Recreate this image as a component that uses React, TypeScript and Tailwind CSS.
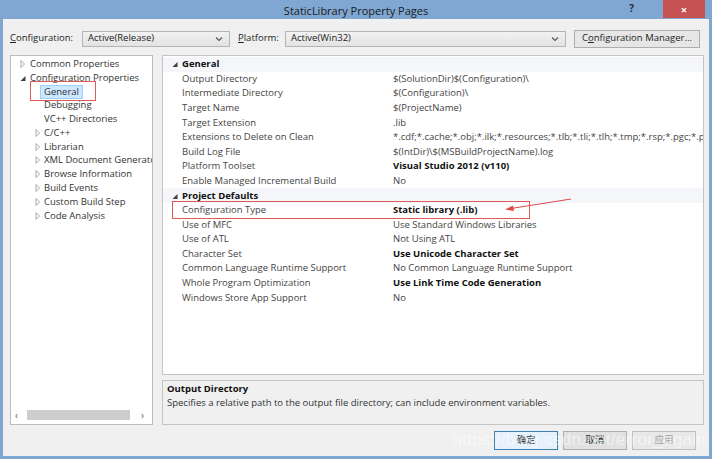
import React from "react";

const F = "font-['Open_Sans','Noto_Sans_CJK_SC',sans-serif]";

function Closed() {
  return (
    <svg width="6" height="8" viewBox="0 0 6 8" className="shrink-0">
      <polygon points="1,0.5 4.5,4 1,7.5" fill="none" stroke="#a8a8a8" strokeWidth="1" />
    </svg>
  );
}
function Open() {
  return (
    <svg width="6" height="8" viewBox="0 0 6 8" className="shrink-0">
      <polygon points="5.5,2 5.5,7 0.5,7" fill="#404040" />
    </svg>
  );
}

function Chevron() {
  return (
    <svg width="8" height="6" viewBox="0 0 8 6">
      <polyline points="1,1.5 4,4.5 7,1.5" fill="none" stroke="#555" strokeWidth="1.1" />
    </svg>
  );
}

function Combo({ text, w }: { text: string; w: string }) {
  return (
    <div className={`${w} shrink-0 h-[16px] border border-[#b4b4b4] bg-gradient-to-b from-[#f2f2f2] to-[#e3e3e3] flex items-center justify-between pl-[5px] pr-[6px]`}>
      <span className="text-[9.5px] text-[#222]">{text}</span>
      <Chevron />
    </div>
  );
}

type Row = { l: string; v?: string; b?: boolean; h?: boolean };

const rows: Row[] = [
  { l: "General", h: true },
  { l: "Output Directory", v: "$(SolutionDir)$(Configuration)\\" },
  { l: "Intermediate Directory", v: "$(Configuration)\\" },
  { l: "Target Name", v: "$(ProjectName)" },
  { l: "Target Extension", v: ".lib" },
  { l: "Extensions to Delete on Clean", v: "*.cdf;*.cache;*.obj;*.ilk;*.resources;*.tlb;*.tli;*.tlh;*.tmp;*.rsp;*.pgc;*.pgd;*.meta;*.tlog;*.manifest" },
  { l: "Build Log File", v: "$(IntDir)\\$(MSBuildProjectName).log" },
  { l: "Platform Toolset", v: "Visual Studio 2012 (v110)", b: true },
  { l: "Enable Managed Incremental Build", v: "No" },
  { l: "Project Defaults", h: true },
  { l: "Configuration Type", v: "Static library (.lib)", b: true },
  { l: "Use of MFC", v: "Use Standard Windows Libraries" },
  { l: "Use of ATL", v: "Not Using ATL" },
  { l: "Character Set", v: "Use Unicode Character Set", b: true },
  { l: "Common Language Runtime Support", v: "No Common Language Runtime Support" },
  { l: "Whole Program Optimization", v: "Use Link Time Code Generation", b: true },
  { l: "Windows Store App Support", v: "No" },
];

const tree: { t: string; lvl: number; arrow?: "o" | "c"; sel?: boolean }[] = [
  { t: "Common Properties", lvl: 0, arrow: "c" },
  { t: "Configuration Properties", lvl: 0, arrow: "o" },
  { t: "General", lvl: 1, sel: true },
  { t: "Debugging", lvl: 1 },
  { t: "VC++ Directories", lvl: 1 },
  { t: "C/C++", lvl: 1, arrow: "c" },
  { t: "Librarian", lvl: 1, arrow: "c" },
  { t: "XML Document Generator", lvl: 1, arrow: "c" },
  { t: "Browse Information", lvl: 1, arrow: "c" },
  { t: "Build Events", lvl: 1, arrow: "c" },
  { t: "Custom Build Step", lvl: 1, arrow: "c" },
  { t: "Code Analysis", lvl: 1, arrow: "c" },
];

export default function App() {
  return (
    <div className={`${F} w-[712px] h-[459px] bg-[#80a7d2] flex flex-col overflow-hidden text-[#1e1e1e]`}>
      {/* Title bar */}
      <div className="h-[19px] shrink-0 grid grid-cols-[1fr_auto_1fr] items-center">
        <div />
        <div className="text-[11px] text-[#1a1a1a] leading-none pt-[1px]">StaticLibrary Property Pages</div>
        <div className="flex justify-end items-start h-full pr-[7px]">
          <span className="text-[10px] font-bold text-[#1e2c40] mr-[29px] mt-[1px]">?</span>
          <div className="w-[42px] h-[18px] bg-[#c75252] flex items-center justify-center">
            <span className="text-white text-[11px] font-bold leading-none">×</span>
          </div>
        </div>
      </div>

      {/* Body */}
      <div className="flex-1 mx-[3px] mb-[3px] bg-[#f0f0f0] flex flex-col">
        {/* config row */}
        <div className="h-[36px] shrink-0 flex items-center pl-[7px] pt-[3px] text-[9.5px]">
          <span className="w-[72px] shrink-0"><u>C</u>onfiguration:</span>
          <Combo text="Active(Release)" w="w-[148px]" />
          <span className="ml-[8px] w-[47px] shrink-0"><u>P</u>latform:</span>
          <Combo text="Active(Win32)" w="w-[281px]" />
          <div className="ml-[8px] w-[126px] shrink-0 h-[18px] border border-[#adadad] bg-[#e6e6e6] flex items-center justify-center text-[9.5px]">
            C<u>o</u>nfiguration Manager...
          </div>
        </div>

        {/* main */}
        <div className="flex pl-[7px] pr-[5px] gap-[9px] h-[370px] shrink-0">
          {/* tree */}
          <div className="relative w-[143px] shrink-0 h-full bg-white border border-[#bcbcbc] flex flex-col overflow-hidden">
            <div className="flex flex-col pt-[1px] text-[9.5px] text-[#333]">
              {tree.map((it, i) => (
                <div key={i} className="h-[13.8px] flex items-center whitespace-nowrap">
                  <div className={it.lvl === 0 ? "w-[19px] shrink-0 pl-[9px] flex" : "w-[33px] shrink-0 pl-[24px] flex"}>
                    {it.arrow === "c" ? <Closed /> : it.arrow === "o" ? <Open /> : null}
                  </div>
                  {it.sel ? (
                    <span className="bg-[#cce8ff] border border-[#99d1ff] px-[3px] -ml-[4px] leading-[12px]">{it.t}</span>
                  ) : (
                    <span>{it.t}</span>
                  )}
                </div>
              ))}
            </div>
            <div className="mt-auto h-[14px] flex items-center px-[4px] mb-[2px]">
              <span className="text-[10px] text-[#666] w-[12px]">‹</span>
              <div className="w-[103px] h-[10px] bg-[#cdcdcd]" />
              <span className="ml-auto text-[10px] text-[#666] mr-[4px]">›</span>
            </div>
            {/* annotation */}
            <div className="absolute left-[19px] top-[25px] w-[66px] h-[20px] border border-[#e05a5a]" />
          </div>

          {/* right */}
          <div className="flex-1 min-w-0 flex flex-col gap-[5px]">
            <div className="relative h-[320px] bg-white border border-[#c4c4c4] pt-[1px] overflow-hidden">
              {rows.map((r, i) =>
                r.h ? (
                  <div key={i} className="h-[14.6px] flex items-center bg-[#f4f6fa]">
                    <div className="w-[19px] shrink-0 pl-[9px] flex"><Open /></div>
                    <span className="text-[9.5px] font-bold text-[#111]">{r.l}</span>
                  </div>
                ) : (
                  <div key={i} className="h-[14.6px] flex items-center text-[9.5px] whitespace-nowrap overflow-hidden">
                    <span className="pl-[19px] w-[230px] shrink-0 text-[#444]">{r.l}</span>
                    <span className={r.b ? "font-bold text-[#111]" : "text-[#444]"}>{r.v}</span>
                  </div>
                )
              )}
              {/* annotations */}
              <div className="absolute left-[9px] top-[145px] w-[358px] h-[18px] border border-[#e05a5a]" />
              <svg className="absolute left-[340px] top-[140px]" width="70" height="20" viewBox="0 0 70 20">
                <line x1="68" y1="3" x2="8" y2="12.5" stroke="#e0474a" strokeWidth="1" />
                <polygon points="2,13.5 10,9.5 11,15" fill="#e0474a" />
              </svg>
            </div>
            <div className="h-[45px] bg-[#f0f0f0] border border-[#c4c4c4] px-[4px] pt-[1px] text-[9.5px] leading-[14px]">
              <div className="font-bold text-[#111]">Output Directory</div>
              <div className="text-[#333]">Specifies a relative path to the output file directory; can include environment variables.</div>
            </div>
          </div>
        </div>

        {/* buttons */}
        <div className="relative flex-1 flex items-center justify-end pr-[13px] gap-[5px]">
          <div className="w-[64px] h-[19px] border border-[#3c7fb1] bg-[#e5f1fb] flex items-center justify-center text-[9.5px]">确定</div>
          <div className="w-[64px] h-[19px] border border-[#adadad] bg-[#e1e1e1] flex items-center justify-center text-[9.5px]">取消</div>
          <div className="w-[64px] h-[19px] border border-[#bfbfbf] bg-[#e8e8e8] flex items-center justify-center text-[9.5px] text-[#a0a0a0]">应用</div>
          <div className="absolute right-[3px] top-[6px] text-[17px] leading-none text-white/50 font-['Liberation_Sans',sans-serif] tracking-[0.3px] pointer-events-none">
            https://blog.csdn.net/error_again
          </div>
        </div>
      </div>
    </div>
  );
}
